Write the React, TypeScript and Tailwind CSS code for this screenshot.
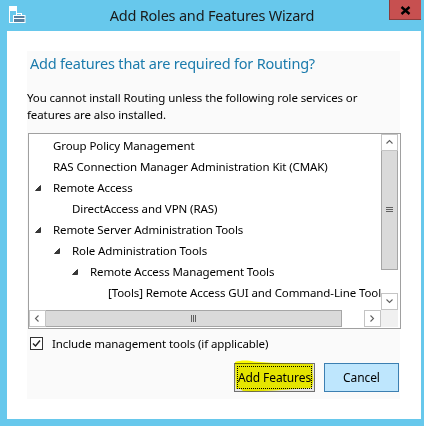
import clsx from 'clsx';

type TreeRow = { level: number; expanded?: boolean; label: string };

const ROWS: TreeRow[] = [
  { level: 0, label: 'Group Policy Management' },
  { level: 0, label: 'RAS Connection Manager Administration Kit (CMAK)' },
  { level: 0, expanded: true, label: 'Remote Access' },
  { level: 1, label: 'DirectAccess and VPN (RAS)' },
  { level: 0, expanded: true, label: 'Remote Server Administration Tools' },
  { level: 1, expanded: true, label: 'Role Administration Tools' },
  { level: 2, expanded: true, label: 'Remote Access Management Tools' },
  { level: 3, label: '[Tools] Remote Access GUI and Command-Line Tools' },
  { level: 3, label: '[Tools] Remote Access module for Windows PowerShell' },
];

const INDENT = ['pl-[6px]', 'pl-[25px]', 'pl-[43px]', 'pl-[61px]'];

function WizardIcon() {
  return (
    <svg width="17" height="17" viewBox="0 0 17 17" fill="none">
      <rect x="0.5" y="0.5" width="7" height="16" stroke="#fff" />
      <rect x="1" y="1" width="6" height="4" fill="#fff" />
      <rect x="4.5" y="9.5" width="11.5" height="7" fill="#57809f" stroke="#fff" />
      <rect x="8" y="7.5" width="4.5" height="2" stroke="#fff" />
      <line x1="5" y1="12.5" x2="16" y2="12.5" stroke="#fff" />
    </svg>
  );
}

function Expander() {
  return (
    <svg width="6" height="6" viewBox="0 0 6 6">
      <polygon points="5.5,0.5 5.5,5.5 0.5,5.5" fill="#3a3a3a" stroke="#1a1a1a" strokeWidth="0.8" />
    </svg>
  );
}

function Chevron({ dir }: { dir: 'up' | 'down' | 'left' | 'right' }) {
  const d = {
    up: 'M1.5 5.5 L4.5 2.5 L7.5 5.5',
    down: 'M1.5 2.5 L4.5 5.5 L7.5 2.5',
    left: 'M5.5 1.5 L2.5 4.5 L5.5 7.5',
    right: 'M2.5 1.5 L5.5 4.5 L2.5 7.5',
  }[dir];
  return (
    <svg width="9" height="9" viewBox="0 0 9 9">
      <path d={d} fill="none" stroke="#606060" strokeWidth="1.1" />
    </svg>
  );
}

function ScrollButton({ dir, className }: { dir: 'up' | 'down' | 'left' | 'right'; className?: string }) {
  return (
    <div className={clsx('flex h-[17px] w-[17px] shrink-0 items-center justify-center border border-[#c4c4c4] bg-white', className)}>
      <Chevron dir={dir} />
    </div>
  );
}

export default function App() {
  return (
    <div className="flex h-[426px] w-[424px] flex-col overflow-hidden bg-[#67c8ec] font-['Noto_Sans',sans-serif] text-[#1e1e1e]">
      {/* Title bar */}
      <div className="flex h-[31px] shrink-0">
        <div className="w-[35px] pl-[9px] pt-[6px]">
          <WizardIcon />
        </div>
        <div className="flex-1 pt-[5px] text-center text-[14.5px] leading-[20px] tracking-[-0.2px] text-[#1a1a1a]">
          Add Roles and Features Wizard
        </div>
        <div className="w-[35px]">
          <div className="flex h-[20px] w-[32px] items-center justify-center border-b border-l border-[#8a3c3c] bg-[#c75050] pt-[2px]">
            <svg width="11" height="9" viewBox="0 0 11 9">
              <path d="M1.5 1 L9.5 8 M9.5 1 L1.5 8" stroke="#000" strokeWidth="2.4" />
            </svg>
          </div>
        </div>
      </div>

      {/* Window body */}
      <div className="ml-[7px] h-[388px] w-[414px] bg-white pl-[20px] pt-[20px]">
        <div className="flex h-[348px] w-[373px] flex-col bg-[#fafafa] text-[11.5px] tracking-[-0.1px]">
          <h1 className="pl-[3px] pt-[2px] text-[14.5px] leading-[20px] tracking-[-0.2px] text-[#1b7bac]">
            Add features that are required for Routing?
          </h1>
          <p className="mt-[16px] leading-[17px] text-black">
            You cannot install Routing unless the following role services or features are also installed.
          </p>

          {/* Tree */}
          <div className="ml-[1px] mt-[10px] grid h-[196px] w-[373px] grid-cols-[352px_17px] grid-rows-[176px_17px] border border-[#a0a0a0] bg-white">
            <div className="overflow-hidden pt-[1px]">
              {ROWS.map((row) => (
                <div
                  key={row.label}
                  className={clsx('flex h-[21px] items-center whitespace-nowrap text-black', INDENT[row.level])}
                >
                  <span className="flex w-[18px] shrink-0 items-center">{row.expanded && <Expander />}</span>
                  {row.label}
                </div>
              ))}
            </div>

            {/* Vertical scrollbar */}
            <div className="flex flex-col">
              <ScrollButton dir="up" />
              <div className="flex h-[119px] items-center justify-center border-x border-b border-[#a6a6a6] bg-[#dadada]">
                <svg width="7" height="6" viewBox="0 0 7 6">
                  <path d="M0 0.5 H7 M0 2.5 H7 M0 4.5 H7" stroke="#606060" />
                </svg>
              </div>
              <div className="flex-1" />
              <ScrollButton dir="down" />
            </div>

            {/* Horizontal scrollbar */}
            <div className="flex">
              <ScrollButton dir="left" />
              <div className="flex w-[296px] items-center justify-center border-y border-r border-[#a6a6a6] bg-[#dadada]">
                <svg width="6" height="7" viewBox="0 0 6 7">
                  <path d="M0.5 0 V7 M2.5 0 V7 M4.5 0 V7" stroke="#606060" />
                </svg>
              </div>
              <div className="flex-1" />
              <ScrollButton dir="right" />
            </div>
            <div className="bg-[#f0f0f0]" />
          </div>

          {/* Checkbox */}
          <div className="ml-[3px] mt-[8px] flex h-[13px] items-center gap-[9px]">
            <div className="flex h-[13px] w-[13px] items-center justify-center border border-[#333] bg-white">
              <svg width="9" height="9" viewBox="0 0 9 9">
                <path d="M1 4.5 L3.5 7 L8 1.5" fill="none" stroke="#222" strokeWidth="1.4" />
              </svg>
            </div>
            <span className="leading-[17px] text-black">Include management tools (if applicable)</span>
          </div>

          {/* Buttons */}
          <div className="mt-[13px] flex justify-end gap-[9px] pr-[1px]">
            <div className="relative">
              <button className="flex h-[29px] w-[81px] items-center justify-center border border-[#707070] bg-[#e5e5e5] p-[2px]">
                <span className="flex h-full w-full items-center justify-center whitespace-nowrap border border-dotted border-black text-[12px] text-black">
                  Add Features
                </span>
              </button>
              <svg
                className="pointer-events-none absolute left-[0px] top-[-3px] mix-blend-multiply"
                width="81"
                height="32"
                viewBox="0 0 81 32"
              >
                <path
                  d="M1 2 C6 0 14 0 20 1.5 L40 3 L62 3.5 L79 4 L78.5 12 L79.5 20 L78 28 L62 29 L40 30.5 L18 31.5 L9 31 L6 29 L2 29 L1.5 18 Z"
                  fill="#ffff00"
                />
              </svg>
            </div>
            <button className="flex h-[29px] w-[75px] items-center justify-center border border-[#3c7fb1] bg-[#bee6fd] text-[12px] text-black">
              Cancel
            </button>
          </div>
        </div>
      </div>
    </div>
  );
}
